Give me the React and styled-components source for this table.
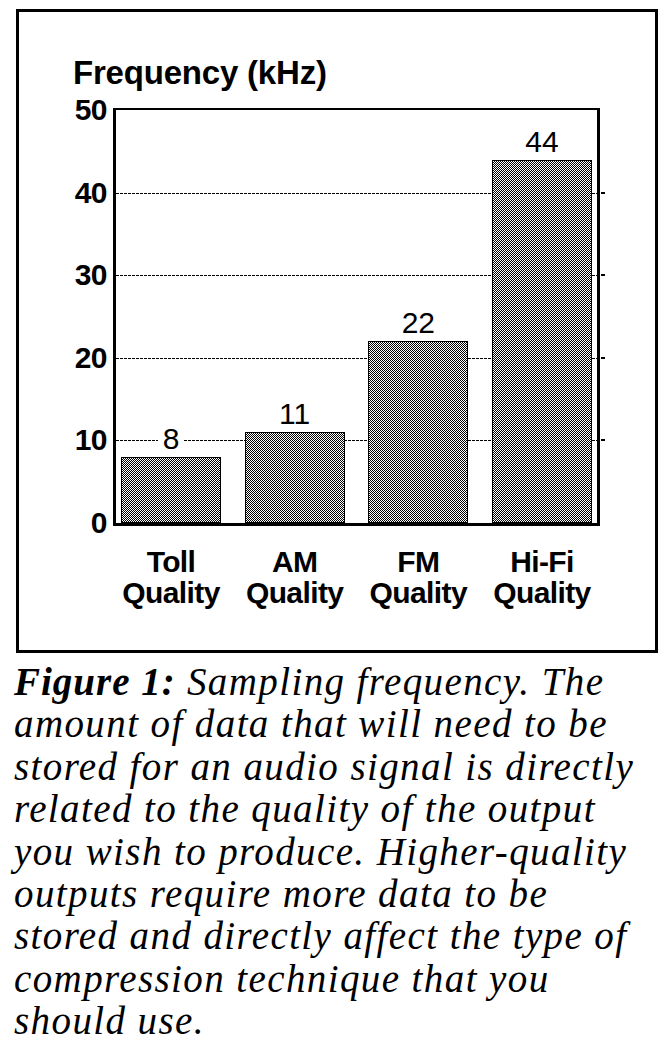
import React from 'react';
import styled, { createGlobalStyle } from 'styled-components';

/* ================= DATA ================= */

const MAX = 50;
const TICKS = [50, 40, 30, 20, 10, 0];
const GRID = [40, 30, 20, 10];

const BARS = [
    { name: 'Toll', value: 8 },
    { name: 'AM', value: 11 },
    { name: 'FM', value: 22 },
    { name: 'Hi-Fi', value: 44 }
];

const PLOT_INNER = 413;

/* ================= STYLES ================= */

const GlobalStyle = createGlobalStyle`
    html, body {
        margin: 0;
        padding: 0;
        background: #fff;
    }

    * {
        box-sizing: border-box;
    }
`;

const Page = styled.div`
    width: 667px;
    padding: 9px 0 0 16px;
    color: #000;
`;

const Frame = styled.div`
    width: 642px;
    height: 644px;
    border: 3px solid #000;
    font-family: "Liberation Sans", Arial, sans-serif;
`;

const AxisTitle = styled.div`
    margin: 44px 0 0 54px;
    font-size: 33px;
    line-height: 33px;
    font-weight: 700;
    letter-spacing: -0.2px;
`;

const ChartRow = styled.div`
    display: flex;
    margin-top: 19px;
`;

const YAxis = styled.div`
    width: 88px;
    margin-right: 6px;
    padding: 2px 0 3px;
    display: flex;
    flex-direction: column;
    justify-content: space-between;
    height: 418px;
`;

const Tick = styled.div`
    height: 0;
    display: flex;
    align-items: center;
    justify-content: flex-end;
    font-size: 30px;
    line-height: 30px;
    font-weight: 700;
    letter-spacing: -0.5px;
`;

const Plot = styled.div`
    position: relative;
    width: 487px;
    height: 418px;
    border-style: solid;
    border-color: #000;
    border-width: 2px 3px 3px 3px;
`;

const GridLayer = styled.div`
    position: absolute;
    inset: 0;
    z-index: 0;
`;

const GridLine = styled.div`
    position: absolute;
    left: 0;
    right: 0;
    height: 1px;
    background: repeating-linear-gradient(
            to right,
            #000 0,
            #000 3px,
            transparent 3px,
            transparent 4px
    );

    /* small tick outside the right axis */
    &::after {
        content: "";
        position: absolute;
        right: -8px;
        top: -1px;
        width: 4px;
        height: 2px;
        background: #000;
    }
`;

const Bars = styled.div`
    position: relative;
    z-index: 1;
    height: 100%;
    padding: 0 5px;
    display: flex;
    align-items: flex-end;
    justify-content: space-between;
`;

const BarSlot = styled.div`
    width: 100px;
    display: flex;
    flex-direction: column;
    align-items: center;
`;

const Value = styled.span`
    margin-bottom: 3px;
    padding: 0 5px;
    background: #fff;
    font-size: 30px;
    line-height: 30px;
    font-weight: 400;
`;

const Bar = styled.div`
    width: 100px;
    border: 1px solid #000;
    background-color: #fff;
    background-image: repeating-conic-gradient(#000 0 25%, #fff 0 50%);
    background-size: 2px 2px;
`;

const Categories = styled.div`
    display: flex;
    justify-content: space-between;
    width: 471px;
    margin: 20px 0 0 102px;
`;

const Category = styled.div`
    width: 100px;
    display: flex;
    flex-direction: column;
    align-items: center;
    font-size: 30px;
    line-height: 31px;
    font-weight: 700;
    letter-spacing: -0.6px;
    white-space: nowrap;
`;

const Caption = styled.p`
    margin: 8px 0 0 -2px;
    font-family: "Liberation Serif", "Times New Roman", serif;
    font-style: italic;
    font-size: 39px;
    line-height: 42.4px;
    letter-spacing: 1.4px;
    white-space: nowrap;
`;

const FigLabel = styled.b`
    font-weight: 700;
    letter-spacing: 1px;
`;

/* ================= COMPONENT ================= */

const CAPTION_LINES = [
    'amount of data that will need to be',
    'stored for an audio signal is directly',
    'related to the quality of the output',
    'you wish to produce. Higher-quality',
    'outputs require more data to be',
    'stored and directly affect the type of',
    'compression technique that you',
    'should use.'
];

const App = () => {
    return (
        <Page>
            <GlobalStyle />

            <Frame>
                <AxisTitle>Frequency (kHz)</AxisTitle>

                <ChartRow>
                    <YAxis>
                        {TICKS.map((t) => (
                            <Tick key={t}>{t}</Tick>
                        ))}
                    </YAxis>

                    <Plot>
                        <GridLayer>
                            {GRID.map((g) => (
                                <GridLine
                                    key={g}
                                    style={{ top: `${(1 - g / MAX) * 100}%` }}
                                />
                            ))}
                        </GridLayer>

                        <Bars>
                            {BARS.map((b) => (
                                <BarSlot key={b.name}>
                                    <Value>{b.value}</Value>
                                    <Bar style={{ height: (b.value / MAX) * PLOT_INNER }} />
                                </BarSlot>
                            ))}
                        </Bars>
                    </Plot>
                </ChartRow>

                <Categories>
                    {BARS.map((b) => (
                        <Category key={b.name}>
                            <span>{b.name}</span>
                            <span>Quality</span>
                        </Category>
                    ))}
                </Categories>
            </Frame>

            <Caption>
                <FigLabel>Figure 1:</FigLabel> Sampling frequency. The
                {CAPTION_LINES.map((line) => (
                    <React.Fragment key={line}>
                        <br />
                        {line}
                    </React.Fragment>
                ))}
            </Caption>
        </Page>
    );
};

export default App;
